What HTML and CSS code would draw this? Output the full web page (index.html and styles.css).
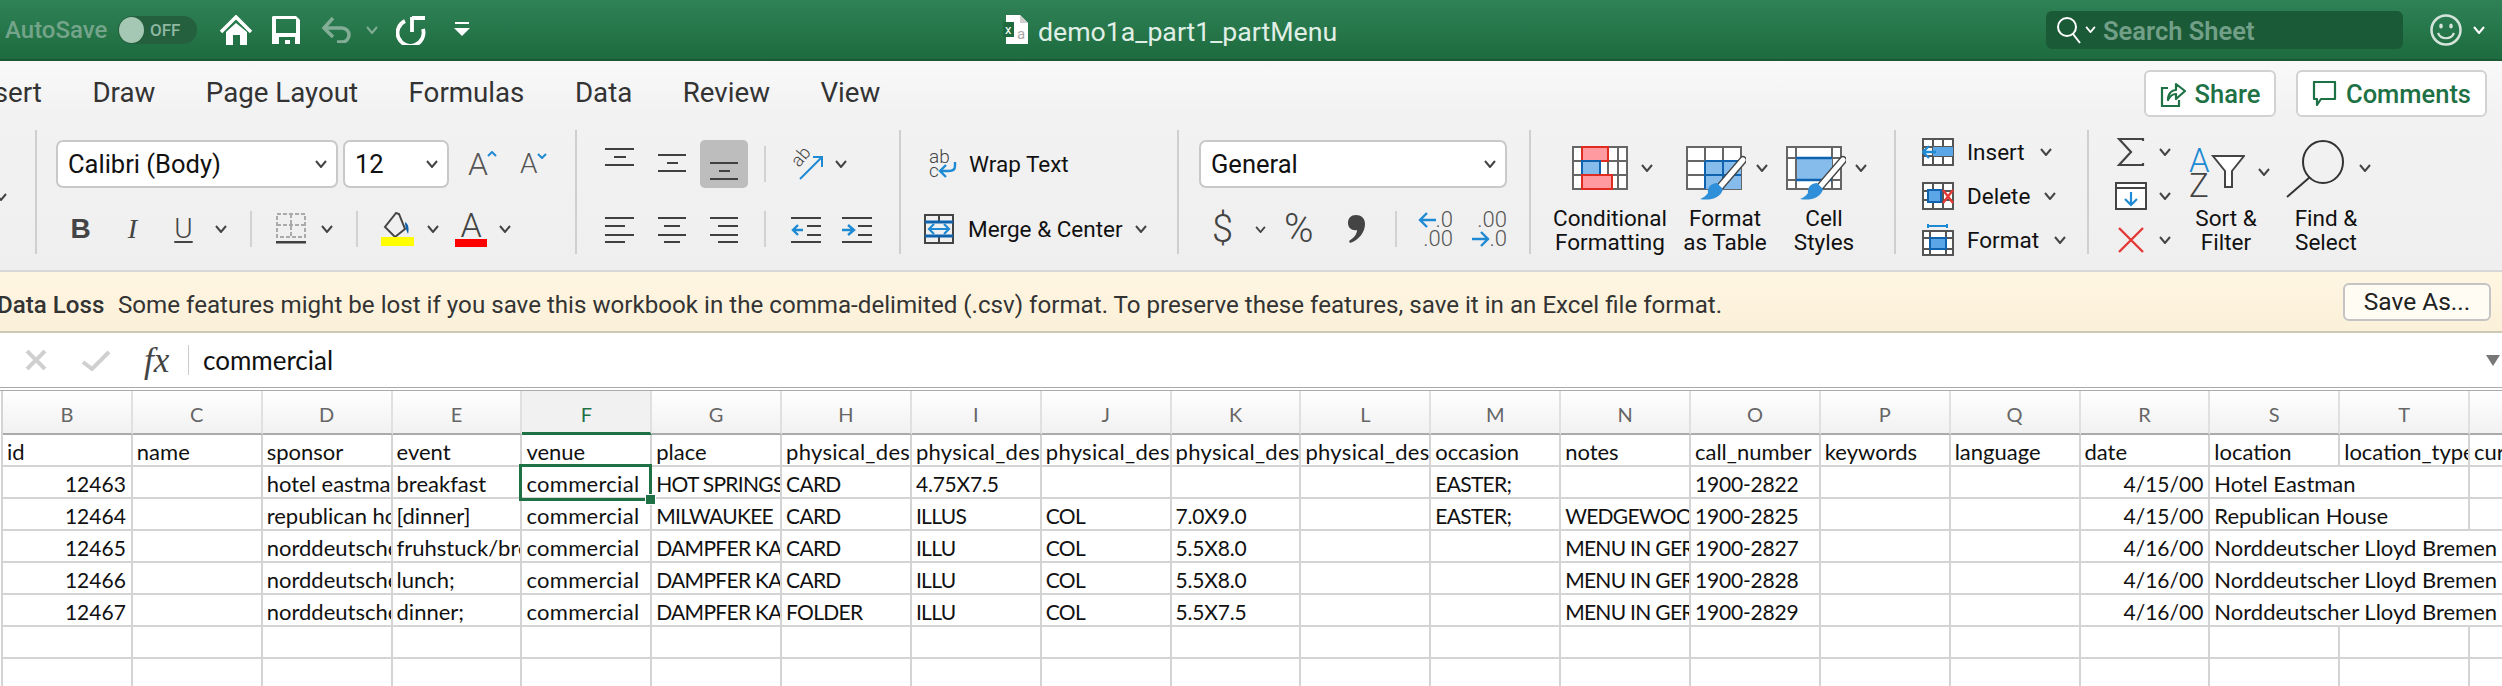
FILE: index.html
```html
<!DOCTYPE html>
<html lang="en">
<head>
<meta charset="utf-8">
<title>demo1a_part1_partMenu</title>
<link rel="stylesheet" href="styles.css">
</head>
<body>
<svg class="defs" aria-hidden="true"><defs>
  <symbol id="chev" viewBox="0 0 12 8"><path d="M1 1l5 6 5-6" fill="none" stroke="currentColor" stroke-width="2"/></symbol>
  <symbol id="brush" viewBox="0 0 60 54"><path d="M57 14L33 42" stroke="#444" stroke-width="8" stroke-linecap="round" fill="none"/><path d="M57 14L33 42" stroke="#fff" stroke-width="5" stroke-linecap="round" fill="none"/><path d="M31 37C25 37 21 42 22 47C20 50 17 52 14 53C24 55 35 52 37 43Z" fill="#2f8fd8"/></symbol>
</defs></svg>

<header class="titlebar">
  <span class="autosave">AutoSave</span>
  <div class="toggle ml12"><span class="knob"></span><span class="off">OFF</span></div>
  <svg class="ml23" width="32" height="30" viewBox="0 0 32 30"><path d="M1 17L16 2L31 17" fill="none" stroke="#fff" stroke-width="3.5"/><path d="M6 17L16 8L27 17V30H20V20H13V30H6Z" fill="#fff"/></svg>
  <svg class="ml20" width="28" height="28" viewBox="0 0 28 28"><path fill="#fff" fill-rule="evenodd" d="M1 0H24L28 4V28H0V1ZM4 3V17H24V3ZM7 21V28H13V24H18V28H23V21Z"/></svg>
  <svg class="ml22" width="30" height="26" viewBox="0 0 30 26"><path d="M11 1L2 11L11 20M3 11H20A7 7 0 0 1 20 25H15" fill="none" stroke="#83ad96" stroke-width="3.5"/></svg>
  <svg class="chev faded ml14"><use href="#chev"/></svg>
  <svg class="ml18" width="30" height="30" viewBox="0 0 30 30"><path d="M9 6A13 13 0 1 0 27 14M16 2V17M16 3H29" fill="none" stroke="#fff" stroke-width="3.8"/></svg>
  <svg class="ml28" width="16" height="15" viewBox="0 0 16 15"><rect x="1" width="14" height="2" fill="#fff"/><path d="M0 6H16L8 14Z" fill="#fff"/></svg>
  <svg class="ml533" width="25" height="29" viewBox="0 0 25 29"><path d="M3 0H17L25 8V29H3Z" fill="#fff"/><path d="M17 0L25 8H17Z" fill="#cfcfcf"/><rect y="7" width="11" height="15" fill="#1d6a3e"/><text x="2" y="19" class="doc-x">x</text><text x="14" y="24" class="doc-a">a</text></svg>
  <span class="doc-title">demo1a_part1_partMenu</span>
  <div class="search">
    <svg width="24" height="28" viewBox="0 0 24 28"><circle cx="10" cy="11" r="9" fill="none" stroke="#fff" stroke-width="2"/><path d="M16 18L23 27" stroke="#fff" stroke-width="2"/></svg>
    <svg class="chev-s ml4" viewBox="0 0 12 8"><path d="M1 1l5 6 5-6" fill="none" stroke="#fff" stroke-width="2"/></svg>
    <span class="search-text">Search Sheet</span>
  </div>
  <svg class="ml27" width="32" height="32" viewBox="0 0 32 32"><circle cx="16" cy="16" r="14.5" fill="none" stroke="#d5e4db" stroke-width="2.5"/><ellipse cx="11" cy="12" rx="1.8" ry="2.6" fill="#d5e4db"/><ellipse cx="21" cy="12" rx="1.8" ry="2.6" fill="#d5e4db"/><path d="M8 19C11 26 21 26 24 19" fill="none" stroke="#d5e4db" stroke-width="2.2"/></svg>
  <svg class="chev white ml11"><use href="#chev"/></svg>
</header>

<div class="chrome">
  <nav class="tabs">
    <span class="tab first">Insert</span>
    <span class="tab">Draw</span>
    <span class="tab">Page Layout</span>
    <span class="tab">Formulas</span>
    <span class="tab">Data</span>
    <span class="tab">Review</span>
    <span class="tab">View</span>
    <button class="tabbtn share">
      <svg width="26" height="26" viewBox="0 0 26 26"><path d="M8 7H2V25H19V19" fill="none" stroke="#1e7145" stroke-width="2.2"/><path d="M8 19C8 12 12 9 16 9V3L25 10L16 18V13C12 13 10 15 8 19Z" fill="none" stroke="#1e7145" stroke-width="2.2" stroke-linejoin="round"/></svg>
      Share
    </button>
    <button class="tabbtn comments">
      <svg width="25" height="25" viewBox="0 0 25 25"><path d="M2 1H23V18H9L5 24V18H2Z" fill="none" stroke="#1e7145" stroke-width="2.2" stroke-linejoin="round"/></svg>
      Comments
    </button>
  </nav>

  <section class="ribbon">
    <div class="edge"><svg class="chev"><use href="#chev"/></svg></div>

    <div class="group w540">
      <div class="row1">
        <div class="select font-name ml19"><span>Calibri (Body)</span><svg class="chev"><use href="#chev"/></svg></div>
        <div class="select font-size ml5"><span>12</span><svg class="chev"><use href="#chev"/></svg></div>
        <span class="grow-a ml19">A<svg class="caret" viewBox="0 0 10 6"><path d="M1 5l4-4 4 4" fill="none" stroke="#1f8ad4" stroke-width="2"/></svg></span>
        <span class="grow-a ml26 small">A<svg class="caret" viewBox="0 0 10 6"><path d="M1 1l4 4 4-4" fill="none" stroke="#1f8ad4" stroke-width="2"/></svg></span>
      </div>
      <div class="row2">
        <span class="fmt bold ml31">B</span>
        <span class="fmt italic ml27">I</span>
        <span class="fmt under ml26">U</span>
        <svg class="chev ml19"><use href="#chev"/></svg>
        <span class="vsep ml23"></span>
        <svg class="ml23" width="32" height="32" viewBox="0 0 32 32"><path d="M2 1H30V24H2ZM16 1V24M2 12H30" fill="none" stroke="#aaa" stroke-width="2" stroke-dasharray="4 2"/><rect x="1" y="28" width="30" height="2.5" fill="#404040"/></svg>
        <svg class="chev ml14"><use href="#chev"/></svg>
        <span class="vsep ml23"></span>
        <svg class="ml23" width="34" height="34" viewBox="0 0 34 34"><path d="M15 1L4 15L14 25L24 17L18 2Z" fill="none" stroke="#444" stroke-width="2"/><path d="M24 10C28 12 28 18 27 22C25 18 24 14 24 10Z" fill="#0f63ae"/><rect y="25" width="33" height="9" fill="#ffff00"/></svg>
        <svg class="chev ml12"><use href="#chev"/></svg>
        <span class="colora ml16">A<i class="redbar"></i></span>
        <svg class="chev ml12"><use href="#chev"/></svg>
      </div>
    </div>

    <div class="group w324">
      <div class="row1">
        <svg class="ml28" width="29" height="48" viewBox="0 0 29 48"><path d="M0 9H29M9 17H21M0 25H29" stroke="#404040" stroke-width="2"/></svg>
        <svg class="ml24" width="28" height="48" viewBox="0 0 28 48"><path d="M0 15H28M9 23H20M0 31H28" stroke="#404040" stroke-width="2"/></svg>
        <span class="selected ml14"><svg width="28" height="48" viewBox="0 0 28 48"><path d="M0 23H28M9 31H20M0 39H28" stroke="#404040" stroke-width="2"/></svg></span>
        <span class="vsep ml16"></span>
        <svg class="ml23" width="34" height="32" viewBox="0 0 34 32"><text class="ab-rot" transform="translate(10 20) rotate(-50)">ab</text><path d="M11 31L32 10M24 9H33V19" fill="none" stroke="#1f8ad4" stroke-width="2"/></svg>
        <svg class="chev ml12"><use href="#chev"/></svg>
      </div>
      <div class="row2">
        <svg class="ml28" width="29" height="28" viewBox="0 0 29 28"><path d="M0 3H29M0 11H20M0 20H29M0 27H20" stroke="#404040" stroke-width="2"/></svg>
        <svg class="ml24" width="28" height="28" viewBox="0 0 28 28"><path d="M0 3H28M6 11H22M0 20H28M6 27H22" stroke="#404040" stroke-width="2"/></svg>
        <svg class="ml24" width="28" height="28" viewBox="0 0 28 28"><path d="M0 3H28M8 11H28M0 20H28M8 27H28" stroke="#404040" stroke-width="2"/></svg>
        <span class="vsep ml26"></span>
        <svg class="ml25" width="30" height="28" viewBox="0 0 30 28"><path d="M0 3H30M16 11H30M16 20H30M0 27H30" stroke="#404040" stroke-width="2"/><path d="M12 15H2M7 10L2 15L7 20" fill="none" stroke="#1f8ad4" stroke-width="2.4"/></svg>
        <svg class="ml21" width="30" height="28" viewBox="0 0 30 28"><path d="M0 3H30M16 11H30M16 20H30M0 27H30" stroke="#404040" stroke-width="2"/><path d="M0 15H11M6 10L12 15L6 20" fill="none" stroke="#1f8ad4" stroke-width="2.4"/></svg>
      </div>
    </div>

    <div class="group w278">
      <div class="row1">
        <svg class="ml28" width="29" height="32" viewBox="0 0 29 32"><text class="ab" x="0" y="15">ab</text><text class="ab" x="0" y="29">c</text><path d="M26 14V18C26 22 23 23 20 23H11M17 17L11 23L17 29" fill="none" stroke="#1f8ad4" stroke-width="2.4"/></svg>
        <span class="ribtext ml11">Wrap Text</span>
      </div>
      <div class="row2">
        <svg class="ml23" width="30" height="30" viewBox="0 0 30 30"><path d="M1 1H29V29H1ZM15 1V8M15 22V29M1 8H29M1 22H29" fill="none" stroke="#444" stroke-width="2"/><path d="M1 8H29M1 22H29" stroke="#0f63ae" stroke-width="3"/><path d="M5 15H25M10 10L5 15L10 20M20 10L25 15L20 20" fill="none" stroke="#1f8ad4" stroke-width="2.2"/></svg>
        <span class="ribtext ml14">Merge &amp; Center</span>
        <svg class="chev ml12"><use href="#chev"/></svg>
      </div>
    </div>

    <div class="group w352">
      <div class="row1">
        <div class="select number ml20"><span>General</span><svg class="chev"><use href="#chev"/></svg></div>
      </div>
      <div class="row2">
        <span class="sym dollar ml33">$</span>
        <svg class="chev-s ml22" viewBox="0 0 12 8"><path d="M1 1l5 6 5-6" fill="none" stroke="#444" stroke-width="2"/></svg>
        <span class="sym percent ml18">%</span>
        <svg class="ml27" width="18" height="28" viewBox="0 0 18 28"><path d="M9 0C14 0 18 3 18 9C18 17 12 25 3 28L2 26C7 23 10 19 10 15C5 16 1 13 1 8C1 3 4 0 9 0Z" fill="#444"/></svg>
        <span class="vsep ml30"></span>
        <span class="dec ml23">
          <span class="decline"><svg width="18" height="16" viewBox="0 0 18 16"><path d="M18 8H2M9 1L2 8L9 15" fill="none" stroke="#1f8ad4" stroke-width="2.4"/></svg>.0</span>
          <span class="decline">.00</span>
        </span>
        <span class="dec ml21">
          <span class="decline">.00</span>
          <span class="decline"><svg width="18" height="16" viewBox="0 0 18 16"><path d="M0 8H16M9 1L16 8L9 15" fill="none" stroke="#1f8ad4" stroke-width="2.4"/></svg>.0</span>
        </span>
      </div>
    </div>

    <div class="group w365 bigrow">
      <div class="big w130 ml14">
        <div class="bigicon ml27">
          <svg width="56" height="44" viewBox="0 0 56 44"><path d="M1 1H55V43H1ZM36 1V43M46 1V43M1 15H55M1 29H55" fill="#fff" stroke="#666" stroke-width="2"/><rect x="10" y="1" width="26" height="14" fill="#ff9aa0" stroke="#e02b20" stroke-width="2"/><rect x="10" y="15" width="18" height="14" fill="#85bcec" stroke="#0f63ae" stroke-width="2"/><rect x="10" y="29" width="30" height="14" fill="#ff9aa0" stroke="#e02b20" stroke-width="2"/></svg>
          <svg class="chev ml13"><use href="#chev"/></svg>
        </div>
        <span class="biglabel">Conditional<br>Formatting</span>
      </div>
      <div class="big w100">
        <div class="bigicon ml11">
          <svg width="60" height="54" viewBox="0 0 60 54"><path d="M1 1H55V43H1ZM19 1V43M37 1V43M1 15H55M1 29H55" fill="#fff" stroke="#666" stroke-width="2"/><rect x="19" y="15" width="36" height="28" fill="#85bcec"/><path d="M19 15H55M19 29H55M19 15V43M37 15V43" fill="none" stroke="#0f63ae" stroke-width="2"/><use href="#brush" width="60" height="54"/></svg>
          <svg class="chev ml10"><use href="#chev"/></svg>
        </div>
        <span class="biglabel">Format<br>as Table</span>
      </div>
      <div class="big w98">
        <div class="bigicon ml11">
          <svg width="60" height="54" viewBox="0 0 60 54"><path d="M1 1H55V43H1ZM10 1V43M46 1V43M1 12H55M1 34H55" fill="#fff" stroke="#666" stroke-width="2"/><rect x="11" y="13" width="35" height="21" fill="#85bcec"/><path d="M10 12H46M10 34H46" stroke="#0f63ae" stroke-width="2.4"/><use href="#brush" width="60" height="54"/></svg>
          <svg class="chev ml9"><use href="#chev"/></svg>
        </div>
        <span class="biglabel">Cell<br>Styles</span>
      </div>
    </div>

    <div class="group w193">
      <div class="cellrow">
        <svg width="32" height="28" viewBox="0 0 32 28"><path d="M1 1H31V27H1ZM11 1V27M21 1V27M1 9H31M1 18H31" fill="#fff" stroke="#555" stroke-width="2"/><rect x="11" y="9" width="20" height="9" fill="#5aa6e6"/><path d="M14 14H2M7 8L1 14L7 20" fill="none" stroke="#1f8ad4" stroke-width="2.4"/></svg>
        <span class="ribtext ml13">Insert</span>
        <svg class="chev ml15"><use href="#chev"/></svg>
      </div>
      <div class="cellrow">
        <svg width="32" height="28" viewBox="0 0 32 28"><path d="M1 1H31V27H1ZM11 1V27M21 1V27M1 9H31M1 18H31" fill="#fff" stroke="#555" stroke-width="2"/><rect x="6" y="8" width="13" height="12" fill="#5aa6e6" stroke="#0f63ae" stroke-width="2"/><path d="M21 8L31 21M31 8L21 21" stroke="#e53935" stroke-width="2.4"/></svg>
        <span class="ribtext ml13">Delete</span>
        <svg class="chev ml14"><use href="#chev"/></svg>
      </div>
      <div class="cellrow">
        <svg width="32" height="32" viewBox="0 0 32 32"><path d="M6 2H25M6 0V4M25 0V4" stroke="#1f8ad4" stroke-width="2"/><path d="M1 7H31V31H1ZM8 7V31M24 7V31M1 14H31M1 25H31" fill="#fff" stroke="#555" stroke-width="2"/><rect x="8" y="14" width="16" height="11" fill="#5aa6e6" stroke="#0f63ae" stroke-width="2"/></svg>
        <span class="ribtext ml13">Format</span>
        <svg class="chev ml15"><use href="#chev"/></svg>
      </div>
    </div>

    <div class="group bigrow">
      <div class="stack">
        <div class="cellrow">
          <svg class="ml26" width="32" height="28" viewBox="0 0 32 28"><path d="M28 3V1H4L16 14L4 27H28V25" fill="none" stroke="#444" stroke-width="2.2"/></svg>
          <svg class="chev ml12"><use href="#chev"/></svg>
        </div>
        <div class="cellrow">
          <svg class="ml26" width="32" height="28" viewBox="0 0 32 28"><rect x="1" y="1" width="30" height="26" fill="#fff" stroke="#444" stroke-width="2"/><path d="M1 6H31" stroke="#444" stroke-width="2"/><path d="M16 10V23M10 17L16 23L22 17" fill="none" stroke="#1f8ad4" stroke-width="2.2"/></svg>
          <svg class="chev ml12"><use href="#chev"/></svg>
        </div>
        <div class="cellrow">
          <svg class="ml26" width="32" height="28" viewBox="0 0 32 28"><path d="M4 2L28 26M28 2L4 26" stroke="#e53935" stroke-width="2.4"/></svg>
          <svg class="chev ml12"><use href="#chev"/></svg>
        </div>
      </div>
      <div class="big w100">
        <div class="bigicon ml13">
          <svg width="56" height="54" viewBox="0 0 56 54"><text class="az blue" x="0" y="26">A</text><text class="az" x="0" y="51">Z</text><path d="M24 10H55L43 25V41H36V25Z" fill="#fff" stroke="#444" stroke-width="2"/></svg>
          <svg class="chev ml13 down"><use href="#chev"/></svg>
        </div>
        <span class="biglabel">Sort &amp;<br>Filter</span>
      </div>
      <div class="big w100">
        <div class="bigicon ml10 up10">
          <svg width="60" height="58" viewBox="0 0 60 58"><ellipse cx="37" cy="22" rx="20" ry="21" fill="none" stroke="#333" stroke-width="2"/><path d="M24 37L1 57" stroke="#333" stroke-width="2"/></svg>
          <svg class="chev ml13 down6"><use href="#chev"/></svg>
        </div>
        <span class="biglabel">Find &amp;<br>Select</span>
      </div>
    </div>
  </section>
</div>

<div class="msgbar">
  <strong>Data Loss</strong>
  <span class="msg">Some features might be lost if you save this workbook in the comma-delimited (.csv) format. To preserve these features, save it in an Excel file format.</span>
  <button class="saveas">Save As...</button>
</div>

<div class="formula">
  <svg class="ml25" width="22" height="20" viewBox="0 0 22 20"><path d="M2 1L20 19M20 1L2 19" stroke="#d0d0d0" stroke-width="4"/></svg>
  <svg class="ml34" width="30" height="21" viewBox="0 0 30 21"><path d="M2 12L11 19L28 2" fill="none" stroke="#d0d0d0" stroke-width="4"/></svg>
  <span class="fx ml33">fx</span>
  <span class="fsep"></span>
  <span class="fvalue">commercial</span>
  <span class="ftri"></span>
</div>

<main class="sheet">
  <div class="ch">B</div><div class="ch">C</div><div class="ch">D</div><div class="ch">E</div><div class="ch active">F</div><div class="ch">G</div><div class="ch">H</div><div class="ch">I</div><div class="ch">J</div><div class="ch">K</div><div class="ch">L</div><div class="ch">M</div><div class="ch">N</div><div class="ch">O</div><div class="ch">P</div><div class="ch">Q</div><div class="ch">R</div><div class="ch">S</div><div class="ch">T</div><div class="ch">U</div>

  <div>id</div><div>name</div><div>sponsor</div><div>event</div><div>venue</div><div>place</div><div class="w">physical_description</div><div class="w">physical_description</div><div class="w">physical_description</div><div class="w">physical_description</div><div class="w">physical_description</div><div>occasion</div><div>notes</div><div>call_number</div><div>keywords</div><div>language</div><div>date</div><div>location</div><div>location_type</div><div>currency</div>

  <div class="num">12463</div><div></div><div>hotel eastman</div><div>breakfast</div><div class="sel w">commercial<i class="selbox"></i></div><div class="cap">HOT SPRINGS</div><div class="cap">CARD</div><div class="d">4.75X7.5</div><div></div><div></div><div></div><div class="cap">EASTER;</div><div></div><div class="d">1900-2822</div><div></div><div></div><div class="num">4/15/00</div><div class="s2">Hotel Eastman</div><div></div>

  <div class="num">12464</div><div></div><div>republican house</div><div>[dinner]</div><div class="w">commercial</div><div class="cap">MILWAUKEE</div><div class="cap">CARD</div><div class="cap">ILLUS</div><div class="cap">COL</div><div class="d">7.0X9.0</div><div></div><div class="cap">EASTER;</div><div class="cap">WEDGEWOOD</div><div class="d">1900-2825</div><div></div><div></div><div class="num">4/15/00</div><div class="s2">Republican House</div><div></div>

  <div class="num">12465</div><div></div><div>norddeutscher</div><div>fruhstuck/breakfast</div><div class="w">commercial</div><div class="cap">DAMPFER KAISER</div><div class="cap">CARD</div><div class="cap">ILLU</div><div class="cap">COL</div><div class="d">5.5X8.0</div><div></div><div></div><div class="cap">MENU IN GERMAN</div><div class="d">1900-2827</div><div></div><div></div><div class="num">4/16/00</div><div class="s3">Norddeutscher Lloyd Bremen</div>

  <div class="num">12466</div><div></div><div>norddeutscher</div><div>lunch;</div><div class="w">commercial</div><div class="cap">DAMPFER KAISER</div><div class="cap">CARD</div><div class="cap">ILLU</div><div class="cap">COL</div><div class="d">5.5X8.0</div><div></div><div></div><div class="cap">MENU IN GERMAN</div><div class="d">1900-2828</div><div></div><div></div><div class="num">4/16/00</div><div class="s3">Norddeutscher Lloyd Bremen</div>

  <div class="num">12467</div><div></div><div>norddeutscher</div><div>dinner;</div><div class="w">commercial</div><div class="cap">DAMPFER KAISER</div><div class="cap">FOLDER</div><div class="cap">ILLU</div><div class="cap">COL</div><div class="d">5.5X7.5</div><div></div><div></div><div class="cap">MENU IN GERMAN</div><div class="d">1900-2829</div><div></div><div></div><div class="num">4/16/00</div><div class="s3">Norddeutscher Lloyd Bremen</div>

  <div></div><div></div><div></div><div></div><div></div><div></div><div></div><div></div><div></div><div></div><div></div><div></div><div></div><div></div><div></div><div></div><div></div><div></div><div></div><div></div>
  <div></div><div></div><div></div><div></div><div></div><div></div><div></div><div></div><div></div><div></div><div></div><div></div><div></div><div></div><div></div><div></div><div></div><div></div><div></div><div></div>
</main>
</body>
</html>
```
FILE: styles.css
```css
* { box-sizing: border-box; }
html, body { margin: 0; padding: 0; }
body {
  width: 2502px;
  height: 686px;
  overflow: hidden;
  background: #fff;
  font-family: Roboto, "Liberation Sans", sans-serif;
  color: #222;
}
.defs { width: 0; height: 0; position: absolute; }
svg { display: block; flex: none; }

.ml4 { margin-left: 4px; } .ml5 { margin-left: 5px; }
.ml9 { margin-left: 9px; } .ml10 { margin-left: 10px; } .ml11 { margin-left: 11px; }
.ml12 { margin-left: 12px; } .ml13 { margin-left: 13px; } .ml14 { margin-left: 14px; }
.ml15 { margin-left: 15px; } .ml16 { margin-left: 16px; } .ml18 { margin-left: 18px; }
.ml19 { margin-left: 19px; } .ml20 { margin-left: 20px; } .ml21 { margin-left: 21px; }
.ml22 { margin-left: 22px; } .ml23 { margin-left: 23px; } .ml24 { margin-left: 24px; }
.ml25 { margin-left: 25px; } .ml26 { margin-left: 26px; } .ml27 { margin-left: 27px; }
.ml28 { margin-left: 28px; } .ml30 { margin-left: 30px; } .ml31 { margin-left: 31px; }
.ml33 { margin-left: 33px; } .ml34 { margin-left: 34px; } .ml533 { margin-left: 533px; }

.chev { width: 12px; height: 8px; color: #444; }
.chev-s { width: 11px; height: 7px; }
.chev.white { color: #fff; }
.chev.faded { color: #83ad96; }

/* title bar */
.titlebar {
  display: flex;
  align-items: center;
  height: 61px;
  padding-left: 5px;
  padding-right: 17px;
  background: linear-gradient(#2f8256, #1d6b3f);
  border-bottom: 2px solid #195a35;
}
.autosave {
  width: 101px;
  font-size: 24px;
  font-weight: 500;
  color: #74a48a;
  white-space: nowrap;
}
.toggle {
  display: flex;
  align-items: center;
  width: 79px;
  height: 28px;
  padding-left: 1px;
  border-radius: 14px;
  background: #245f3e;
}
.knob { width: 25px; height: 26px; border-radius: 50%; background: #a5c8b4; }
.off { margin-left: 6px; font-size: 17px; font-weight: 500; color: #8fb8a2; }
.doc-x { font: 13px Roboto, sans-serif; fill: #fff; }
.doc-a { font: 15px Roboto, sans-serif; fill: #aaa; }
.doc-title { width: 296px; margin-left: 10px; margin-top: 4px; font-size: 26.7px; color: #e0efe6; white-space: nowrap; }
.search {
  display: flex;
  align-items: center;
  width: 357px;
  height: 38px;
  margin-left: 712px;
  padding-left: 11px;
  border-radius: 6px;
  background: #1b5a36;
}
.search-text { margin-left: 7px; margin-top: 2px; font-size: 25.5px; font-weight: 600; color: #719f87; white-space: nowrap; }

/* tabs and ribbon */
.chrome { height: 209px; background: linear-gradient(#f9f9f9, #f2f2f2 25%, #efefef); }
.tabs { display: flex; align-items: center; gap: 50.5px; height: 65px; padding-right: 15px; }
.tab { font-size: 27.7px; color: #333; white-space: nowrap; margin-top: -2px; }
.tab.first { margin-left: -29px; }
.tabbtn {
  display: flex;
  align-items: center;
  justify-content: center;
  gap: 9px;
  height: 47px;
  flex: none;
  border: 2px solid #d2d2d2;
  border-radius: 6px;
  background: #fff;
  color: #1e7145;
  font: 500 25.5px Roboto, sans-serif;
}
.share { width: 132px; margin-left: auto; }
.comments { width: 191px; margin-left: -30.5px; }

.ribbon { display: flex; height: 140px; padding-top: 4px; align-items: flex-start; }
.edge { display: flex; align-items: flex-end; width: 35px; height: 71px; margin-left: -5px; margin-right: 5px; }
.group { height: 124px; border-left: 2px solid #cfcfcf; flex: none; }
.w540 { width: 540px; } .w324 { width: 324px; } .w278 { width: 278px; }
.w352 { width: 352px; } .w365 { width: 365px; } .w193 { width: 193px; }
.row1 { display: flex; align-items: center; height: 48px; margin-top: 10px; }
.row2 { display: flex; align-items: center; height: 36px; margin-top: 23px; }
.vsep { width: 2px; height: 36px; background: #d2d2d2; }

.select {
  display: flex;
  align-items: center;
  justify-content: space-between;
  height: 48px;
  padding: 0 9px 0 10px;
  border: 2px solid #c9c9c9;
  border-radius: 7px;
  background: #fff;
  font-size: 25.5px;
  color: #111;
}
.font-name { width: 282px; }
.font-size { width: 106px; }
.number { width: 308px; }
.grow-a { display: flex; width: 26px; font-size: 32px; font-weight: 300; color: #555; line-height: 1; }
.grow-a.small { font-size: 28px; }
.caret { width: 10px; height: 6px; margin-left: -1px; margin-top: 3px; }
.fmt { width: 25px; text-align: center; font-size: 28px; color: #444; line-height: 1; }
.bold { font-weight: 700; font-family: "Liberation Sans", sans-serif; }
.italic { font-style: italic; font-weight: 300; font-family: "Liberation Serif", serif; }
.under { font-weight: 300; text-decoration: underline; text-underline-offset: 3px; }
.colora {
  display: flex;
  flex-direction: column;
  align-items: center;
  width: 32px;
  font-size: 34px;
  font-weight: 300;
  line-height: 26px;
  color: #444;
}
.redbar { width: 32px; height: 8px; margin-top: 1px; background: #f00; }
.selected { display: flex; justify-content: center; width: 48px; height: 48px; border-radius: 5px; background: #bdbdbd; }
.ribtext { font-size: 22.5px; color: #111; white-space: nowrap; }
.ab { font: 300 19px Roboto, sans-serif; fill: #444; }
.ab-rot { font: 300 18px Roboto, sans-serif; fill: #444; }
.sym { font-weight: 300; color: #444; line-height: 1; }
.dollar { width: 21px; font-size: 38px; }
.percent { width: 36px; font-size: 40px; }
.dec { display: flex; flex-direction: column; align-items: flex-end; width: 33px; font-size: 22px; font-weight: 300; line-height: 19px; color: #555; }
.decline { display: flex; align-items: center; }

.bigrow { display: flex; }
.big { display: flex; flex-direction: column; flex: none; }
.w130 { width: 130px; } .w100 { width: 100px; } .w98 { width: 98px; }
.bigicon { display: flex; height: 84px; padding-top: 16px; align-items: flex-start; }
.bigicon .chev { margin-top: 18px; }
.bigicon .chev.down { margin-top: 22px; }
.bigicon.up10 { padding-top: 10px; }
.bigicon .chev.down6 { margin-top: 24px; }
.biglabel { display: block; font-size: 22.5px; line-height: 24px; text-align: center; color: #111; white-space: nowrap; }
.cellrow { display: flex; align-items: center; height: 44px; margin-left: 26px; }
.stack { width: 87px; }
.stack .cellrow { margin-left: 0; }
.az { font: 300 33px Roboto, sans-serif; fill: #444; }
.az.blue { fill: #1f8ad4; }

/* message bar */
.msgbar {
  display: flex;
  align-items: center;
  height: 63px;
  border-top: 2px solid #d7d7d7;
  border-bottom: 2px solid #cfc8b2;
  background: linear-gradient(#fff6e2, #fbf0d9);
  font-size: 24.15px;
  color: #333;
  white-space: nowrap;
}
.msgbar strong { width: 103px; margin-left: -3px; margin-top: 6px; font-weight: 500; }
.msg { width: 2225px; margin-left: 18px; margin-top: 6px; }
.saveas {
  width: 148px;
  height: 38px;
  flex: none;
  border: 2px solid #c4c4c4;
  border-radius: 6px;
  background: #fffcf4;
  font: 24.5px Roboto, sans-serif;
  color: #222;
}

/* formula bar */
.formula {
  display: flex;
  align-items: center;
  height: 58px;
  border-bottom: 4px double #aaa;
  background: #fff;
}
.fx { font: italic 35px "Liberation Serif", serif; color: #444; line-height: 1; width: 27px; }
.fsep { width: 1px; height: 30px; margin-left: 17px; background: #ccc; }
.fvalue { margin-left: 14px; font: 26px Lato, sans-serif; color: #111; }
.ftri {
  width: 0;
  height: 0;
  margin-left: auto;
  margin-right: 2px;
  border-left: 7px solid transparent;
  border-right: 7px solid transparent;
  border-top: 11px solid #777;
}

/* sheet */
.sheet {
  display: grid;
  grid-template-columns: repeat(20, 129.85px);
  grid-template-rows: 44px;
  grid-auto-rows: 32px;
  width: 2598px;
  margin-left: 1px;
  border-left: 2px solid #d4d4d4;
  font: 22px/33px Lato, sans-serif;
  color: #111;
}
.sheet > div {
  padding: 0 5px 0 4px;
  border-right: 2px solid #d4d4d4;
  border-bottom: 2px solid #d4d4d4;
  overflow: hidden;
  white-space: nowrap;
}
.sheet > .ch {
  padding: 0;
  border-right-color: #e0e0e0;
  border-bottom: 2px solid #aaa;
  background: linear-gradient(#fff, #f1f1f1);
  color: #666;
  font-size: 20px;
  line-height: 46px;
  text-align: center;
}
.sheet > .ch.active { background: #f1f1f1; color: #1e7145; border-bottom: 3px solid #1e7145; }
.sheet > .num { text-align: right; font-size: 21px; }
.sheet > .w { letter-spacing: .3px; }
.sheet > .d { font-size: 21px; letter-spacing: -.2px; }
.sheet > .cap { font-size: 21px; letter-spacing: -.7px; }
.sheet > .s2 { grid-column: span 2; }
.sheet > .s3 { grid-column: span 3; }
.sheet > .sel { position: relative; overflow: visible; z-index: 1; }
.selbox {
  position: absolute;
  inset: -3px -2px -4px -3px;
  border: 3px solid #1e7145;
}
.selbox::after {
  content: "";
  position: absolute;
  right: -6px;
  bottom: -6px;
  width: 9px;
  height: 9px;
  background: #1e7145;
  box-shadow: 0 0 0 1px #fff;
}
```
